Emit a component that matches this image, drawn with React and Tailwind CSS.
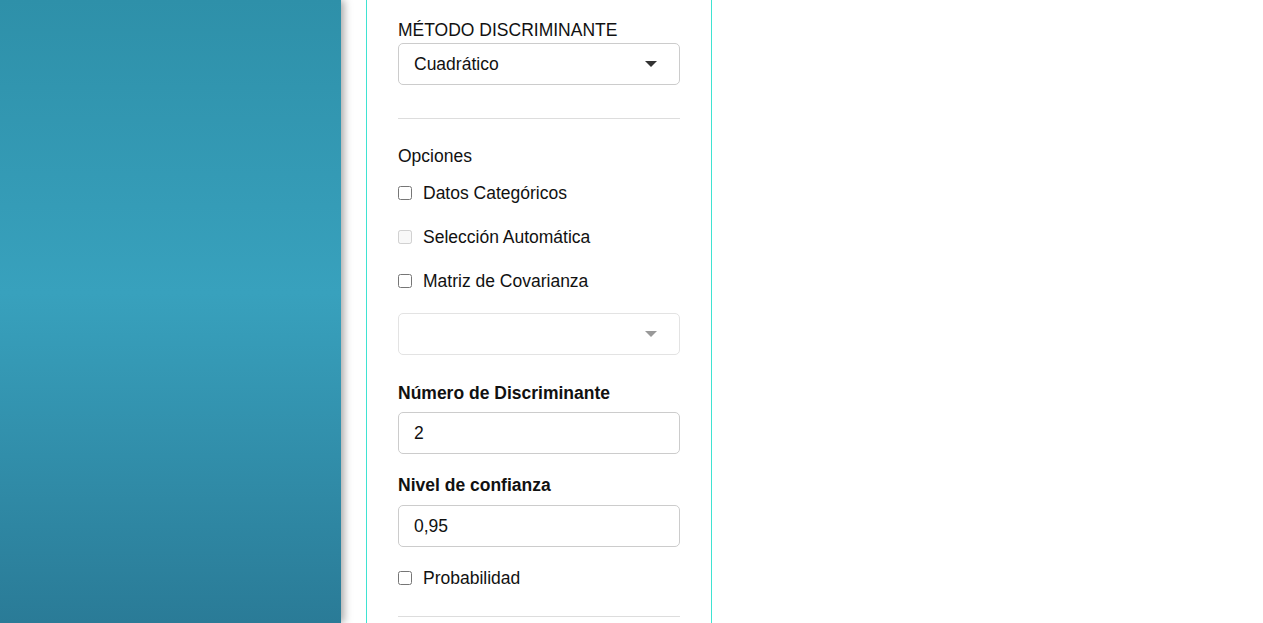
import React from 'react';

const font = { fontFamily: '"Liberation Sans", Arial, sans-serif' };

function Caret({ muted }) {
  return (
    <span
      className={`block w-0 h-0 border-l-[6px] border-r-[6px] border-t-[6px] border-l-transparent border-r-transparent ${
        muted ? 'border-t-[#999999]' : 'border-t-[#333333]'
      }`}
    />
  );
}

function Select({ value, disabled }) {
  return (
    <div
      className={`flex items-center justify-between h-[42px] pl-[15px] pr-[22px] rounded-[5px] border ${
        disabled ? 'border-[#e3e3e3]' : 'border-[#cccccc]'
      }`}
    >
      <span>{value}</span>
      <Caret muted={disabled} />
    </div>
  );
}

function Check({ label, disabled }) {
  return (
    <label className="flex items-center h-[44px]">
      <input
        type="checkbox"
        disabled={disabled}
        className="w-[14px] h-[14px] m-0"
      />
      <span className="ml-[11px]">{label}</span>
    </label>
  );
}

function Field({ value }) {
  return (
    <input
      type="text"
      defaultValue={value}
      className="block w-full h-[42px] px-[15px] rounded-[5px] border border-[#cccccc] text-[#111111] outline-none"
    />
  );
}

export default function App() {
  return (
    <div
      className="flex h-[623px] bg-white text-[17.5px] leading-[21px] text-[#111111] overflow-hidden"
      style={font}
    >
      <aside className="w-[341px] h-full shrink-0 bg-linear-to-b from-[#2e90a9] via-[#38a1bd] via-47% to-[#2a7b97] shadow-[3px_0_8px_rgba(0,0,0,0.35)]" />

      <section className="ml-[25px] w-[346px] h-full shrink-0 border-l border-r border-[#3fe3d2] px-[31px] pt-[20px]">
        <div>MÉTODO DISCRIMINANTE</div>
        <div className="mt-[2px]">
          <Select value="Cuadrático" />
        </div>

        <hr className="mt-[33px] border-0 border-t border-[#dddddd]" />

        <div className="mt-[27px]">Opciones</div>
        <div className="mt-[4px]">
          <Check label="Datos Categóricos" />
          <Check label="Selección Automática" disabled />
          <Check label="Matriz de Covarianza" />
        </div>

        <div className="mt-[10px]">
          <Select value="" disabled />
        </div>

        <div className="mt-[28px] font-bold">Número de Discriminante</div>
        <div className="mt-[8px]">
          <Field value="2" />
        </div>

        <div className="mt-[21px] font-bold">Nivel de confianza</div>
        <div className="mt-[9px]">
          <Field value="0,95" />
        </div>

        <div className="mt-[9px]">
          <Check label="Probabilidad" />
        </div>

        <hr className="mt-[16px] border-0 border-t border-[#dddddd]" />
      </section>
    </div>
  );
}
